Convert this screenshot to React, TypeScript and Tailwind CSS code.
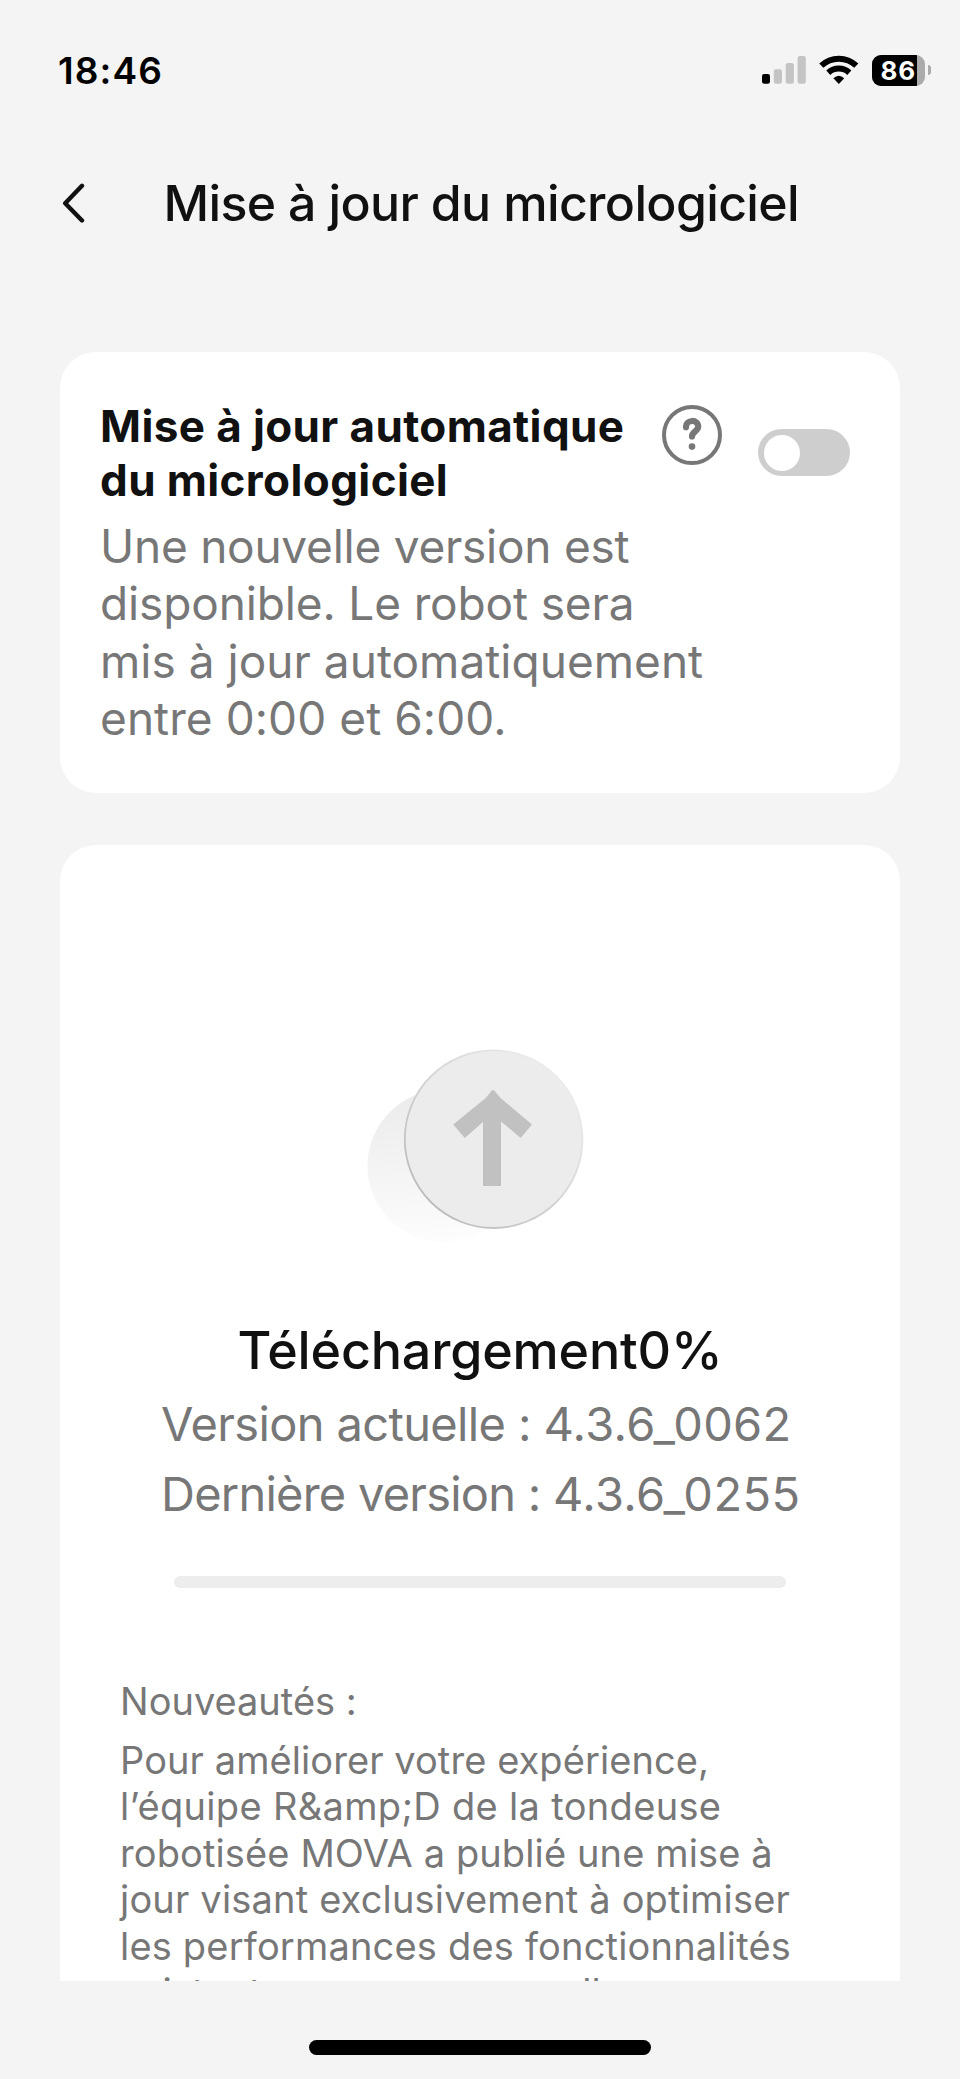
import React, { useState } from 'react';

const NEWS_LINES = [
  { text: 'Pour améliorer votre expérience,', tracking: 'tracking-[0.08px]' },
  { text: 'l’équipe R&amp;D de la tondeuse', tracking: 'tracking-[0.33px]' },
  { text: 'robotisée MOVA a publié une mise à', tracking: 'tracking-[0.12px]' },
  { text: 'jour visant exclusivement à optimiser', tracking: 'tracking-[0.18px]' },
  { text: 'les performances des fonctionnalités', tracking: 'tracking-[0.19px]' },
  { text: 'existantes, aucune nouvelle', tracking: 'tracking-[0.2px]' },
];

function StatusBar() {
  return (
    <div className="flex h-[140px] items-center justify-between pl-[58px] pr-[29px]">
      <span className="text-[37px] leading-none font-semibold tracking-[1.1px] text-black">18:46</span>
      <div className="flex items-center">
        <svg width="44" height="32" viewBox="762 54 44 32">
          <rect x="762" y="74" width="8" height="9.7" rx="2.2" fill="#000" />
          <rect x="773.8" y="69.3" width="8.2" height="14.4" rx="2.2" fill="#c4c4c4" />
          <rect x="785.7" y="63" width="8.2" height="20.7" rx="2.2" fill="#c4c4c4" />
          <rect x="797.6" y="56" width="8.2" height="27.7" rx="2.2" fill="#c4c4c4" />
        </svg>
        <svg className="ml-[13px]" width="40" height="32" viewBox="819 54 40 32">
          <g fill="none" stroke="#000" strokeWidth="6">
            <path d="M821.3 65.7 A25.2 25.2 0 0 1 856.3 65.7" />
            <path d="M828.3 72.7 A15.4 15.4 0 0 1 849.3 72.7" />
          </g>
          <path d="M838.8 84 L833.4 78.3 Q838.8 73.2 844.2 78.3 Z" fill="#000" />
        </svg>
        <div className="ml-[13px] flex items-center">
          <div className="relative flex h-[31px] w-[53px] overflow-hidden rounded-[9px] bg-[#ababab]">
            <div className="w-[45px] bg-black" />
            <span className="absolute left-[8.5px] top-[3px] text-[26px] leading-[26px] font-bold tracking-[0.8px] text-white">
              86
            </span>
          </div>
          <div className="ml-[3px] h-[10px] w-[3px] rounded-r-full bg-[#ababab]" />
        </div>
      </div>
    </div>
  );
}

function Header() {
  return (
    <header className="flex h-[126px] items-center pl-[62px]">
      <svg width="24" height="40" viewBox="0 0 24 40" fill="none" stroke="#111" strokeWidth="4.4" strokeLinecap="round" strokeLinejoin="round">
        <path d="M20 2.8 L3.2 20.3 L20 37.5" />
      </svg>
      <h1 className="ml-[77.5px] whitespace-nowrap text-[50px] leading-none font-medium tracking-[-0.65px] text-[#111]">
        Mise à jour du micrologiciel
      </h1>
    </header>
  );
}

function HelpIcon() {
  return (
    <svg width="60" height="60" viewBox="0 0 60 60" fill="none" stroke="#777">
      <circle cx="30" cy="30" r="28" strokeWidth="4" />
      <path d="M24 22.2 C24 14 36.2 14 36.2 21.6 C36.2 26.4 30 26.6 30 31.4" strokeWidth="6.2" strokeLinecap="round" />
      <circle cx="30" cy="41.6" r="3.3" fill="#777" stroke="none" />
    </svg>
  );
}

function UpdateIcon() {
  return (
    <svg width="220" height="200" viewBox="366 1046 220 200">
      <defs>
        <linearGradient id="shade" x1="0.4" y1="0" x2="0.5" y2="1">
          <stop offset="0" stopColor="#ebebeb" />
          <stop offset="1" stopColor="#fdfdfd" />
        </linearGradient>
        <linearGradient id="rim" x1="0.85" y1="0.15" x2="0.15" y2="0.85">
          <stop offset="0" stopColor="#ebebeb" />
          <stop offset="1" stopColor="#bdbdbd" />
        </linearGradient>
      </defs>
      <circle cx="444" cy="1166" r="76.5" fill="url(#shade)" />
      <circle cx="493.6" cy="1139.2" r="88.8" fill="#ececec" stroke="url(#rim)" strokeWidth="1.8" />
      <path
        d="M453.2 1124.5 L485.7 1098 L492 1090.2 L494 1090.2 L500.5 1098 L532 1124.5 L520.7 1138 L501 1121.5 V1186 H483 V1122 L464.8 1138 Z"
        fill="#c1c1c1"
      />
    </svg>
  );
}

export default function App() {
  const [auto, setAuto] = useState(false);

  return (
    <div className="flex h-[2079px] w-[960px] flex-col overflow-hidden bg-[#f4f4f4] font-['Inter',sans-serif]">
      <StatusBar />
      <Header />

      <section className="mx-[60px] mt-[86px] flex h-[441px] shrink-0 items-start rounded-[36px] bg-white pt-[47px] pl-[40px]">
        <div className="w-[562px] whitespace-nowrap">
          <h2 className="text-[44px] leading-[54px] font-bold tracking-[0.39px] text-[#111]">
            Mise à jour automatique
            <br />
            du micrologiciel
          </h2>
          <div className="mt-[11px] text-[46px] leading-[57.3px] text-[#777]">
            <p className="tracking-[-0.25px]">Une nouvelle version est</p>
            <p className="tracking-[-0.14px]">disponible. Le robot sera</p>
            <p className="tracking-[0.02px]">mis à jour automatiquement</p>
            <p className="tracking-[0.06px]">entre 0:00 et 6:00.</p>
          </div>
        </div>
        <div className="mt-[6px]">
          <HelpIcon />
        </div>
        <button
          onClick={() => setAuto(!auto)}
          className={`mt-[30px] ml-[36px] flex h-[47px] w-[92px] items-center rounded-full bg-[#cecece] px-[6px] ${auto ? 'justify-end' : 'justify-start'}`}
        >
          <span className="h-[36px] w-[36px] rounded-full bg-white" />
        </button>
      </section>

      <section className="mx-[60px] mt-[52px] h-[1136px] shrink-0 overflow-hidden rounded-t-[36px] bg-white">
        <div className="mt-[201px] ml-[306px] h-[200px]">
          <UpdateIcon />
        </div>
        <div className="mt-[75px] text-center text-[52px] leading-[60px] font-medium tracking-[-0.17px] text-[#111]">
          Téléchargement0%
        </div>
        <div className="mt-[8px] ml-[101px] whitespace-nowrap text-[47px] leading-[70px] text-[#777]">
          <p>
            <span className="tracking-[-0.63px]">Version actuelle : </span>
            <span className="tracking-[0.33px]">4.3.6_0062</span>
          </p>
          <p>
            <span className="tracking-[-0.77px]">Dernière version : </span>
            <span className="tracking-[0.45px]">4.3.6_0255</span>
          </p>
        </div>
        <div className="mx-auto mt-[47px] h-[12px] w-[612px] rounded-full bg-[#ededed]" />
        <div className="mt-[90px] ml-[60px] whitespace-nowrap text-[38px] leading-[46.5px] text-[#777]">
          <p>Nouveautés :</p>
          <div className="mt-[12.2px]">
            {NEWS_LINES.map((line) => (
              <p key={line.text} className={line.tracking}>
                {line.text}
              </p>
            ))}
          </div>
        </div>
      </section>

      <div className="mx-auto mt-[59px] h-[15px] w-[342px] shrink-0 rounded-full bg-black" />
    </div>
  );
}
